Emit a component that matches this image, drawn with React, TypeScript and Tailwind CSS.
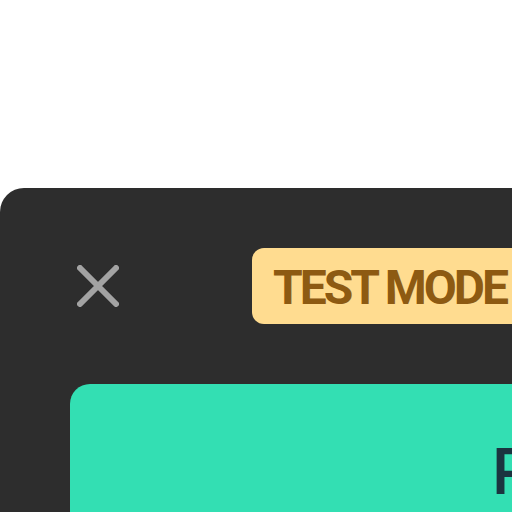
export default function App() {
  return (
    <div className="w-[512px] h-[512px] overflow-hidden bg-white pt-[188px] font-['Roboto',sans-serif]">
      <div className="w-[960px] h-full bg-[#2d2d2d] rounded-tl-[24px]">
        {/* Header */}
        <div className="flex items-center pt-[60px]">
          <button type="button" aria-label="Close" className="ml-[77px] w-[42px] h-[42px] shrink-0">
            <svg viewBox="0 0 42 42" className="w-[42px] h-[42px]" fill="none" stroke="#a3a3a3" strokeWidth={6} strokeLinecap="round">
              <path d="M3 3L39 39M39 3L3 39" />
            </svg>
          </button>
          <div className="ml-[133px] h-[76px] rounded-[12px] bg-[#ffdc90] pl-[21px] pr-[21px] shrink-0">
            <span className="block pt-[2px] leading-[76px] text-[48px] font-bold tracking-[-3px] text-[#8d5a12] whitespace-nowrap">
              TEST MODE
            </span>
          </div>
        </div>

        {/* Card */}
        <div className="ml-[70px] mt-[60px] h-[300px] bg-[#33dfb3] rounded-tl-[20px] pt-[50px] pl-[422px]">
          <p className="text-[64px] leading-[77px] font-medium text-[#1b3440] whitespace-nowrap">
            Pay $10.00
          </p>
        </div>
      </div>
    </div>
  );
}
